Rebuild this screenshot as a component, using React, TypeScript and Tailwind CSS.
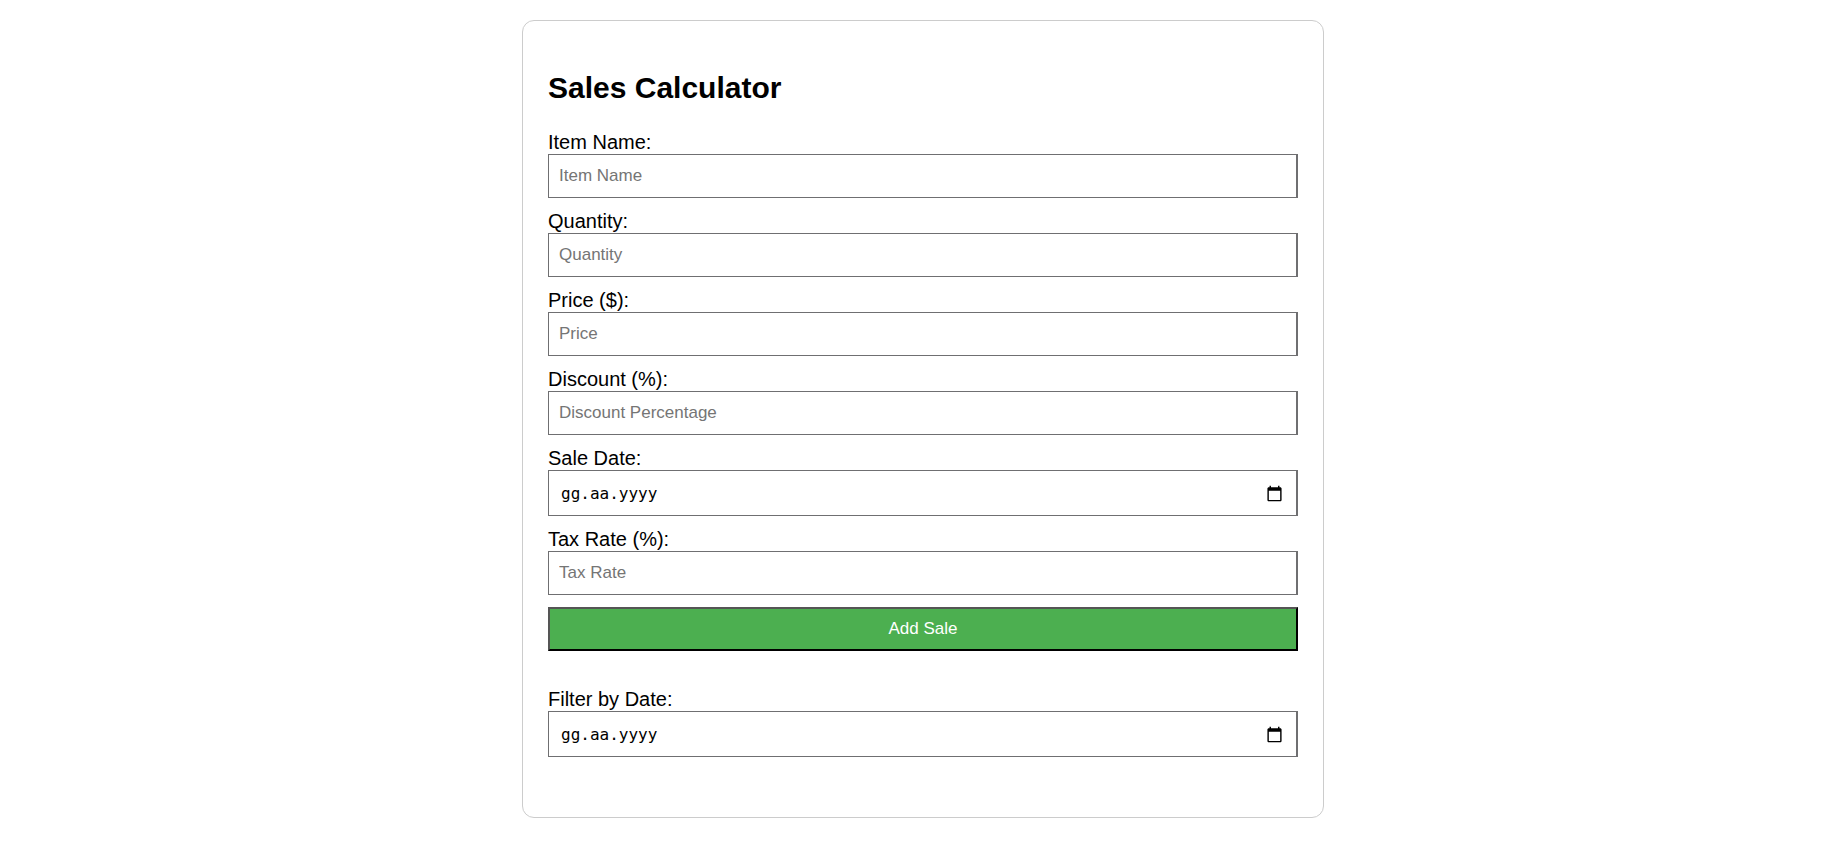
import { useState, type FormEvent } from "react";

const inputClass =
  "block h-11 w-full rounded-none border border-r-2 border-[#6f6f71] bg-white px-[10px] text-[17px] text-black placeholder:text-[#757575] outline-none [appearance:textfield]";

const labelClass = "block text-[20px] leading-[23px]";

type FieldProps = {
  id: string;
  label: string;
  placeholder: string;
  type?: "text" | "number";
};

function Field({ id, label, placeholder, type = "number" }: FieldProps) {
  return (
    <div>
      <label htmlFor={id} className={labelClass}>
        {label}
      </label>
      <input id={id} name={id} type={type} placeholder={placeholder} className={inputClass} />
    </div>
  );
}

function CalendarIcon() {
  return (
    <svg viewBox="0 0 24 24" className="size-[17px]" fill="currentColor" aria-hidden="true">
      <path d="M20 3h-1V1h-2v2H7V1H5v2H4c-1.1 0-2 .9-2 2v16c0 1.1 .9 2 2 2h16c1.1 0 2-.9 2-2V5c0-1.1-.9-2-2-2zm0 18H4V8h16v13z" />
    </svg>
  );
}

function DateField({ id, label }: { id: string; label: string }) {
  const [value, setValue] = useState("");
  return (
    <div>
      <label htmlFor={id} className={labelClass}>
        {label}
      </label>
      <div className="flex h-[46px] items-center border border-r-2 border-[#6f6f71] bg-white pr-[13px] pl-3">
        <input
          id={id}
          name={id}
          type="text"
          inputMode="numeric"
          placeholder="gg.aa.yyyy"
          value={value}
          onChange={(e) => setValue(e.target.value)}
          className="min-w-0 flex-1 pt-0.5 font-['DejaVu_Sans_Mono',monospace] text-[16px] outline-none placeholder:text-black"
        />
        <button
          type="button"
          aria-label="Today"
          onClick={() => setValue(new Date().toLocaleDateString("tr-TR"))}
        >
          <CalendarIcon />
        </button>
      </div>
    </div>
  );
}

export default function App() {
  const addSale = (e: FormEvent) => e.preventDefault();

  return (
    <main className="bg-white py-5 pl-[6px] font-['Liberation_Sans',Arial,sans-serif] text-black">
      <div className="mx-auto max-w-[802px] rounded-[12px] border border-[#cccccc] px-[25px] pt-[50px] pb-[60px]">
        <h1 className="mb-[26px] text-[30px] leading-[34px] font-bold">Sales Calculator</h1>
        <form onSubmit={addSale} className="flex flex-col gap-3">
          <Field id="item-name" label="Item Name:" placeholder="Item Name" type="text" />
          <Field id="quantity" label="Quantity:" placeholder="Quantity" />
          <Field id="price" label="Price ($):" placeholder="Price" />
          <Field id="discount" label="Discount (%):" placeholder="Discount Percentage" />
          <DateField id="sale-date" label="Sale Date:" />
          <Field id="tax-rate" label="Tax Rate (%):" placeholder="Tax Rate" />
          <button
            type="submit"
            className="h-11 w-full border-2 border-t-[#555555] border-r-black border-b-black border-l-[#555555] bg-[#4caf50] text-[17px] text-white"
          >
            Add Sale
          </button>
        </form>
        <div className="mt-[37px]">
          <DateField id="filter-date" label="Filter by Date:" />
        </div>
      </div>
    </main>
  );
}
